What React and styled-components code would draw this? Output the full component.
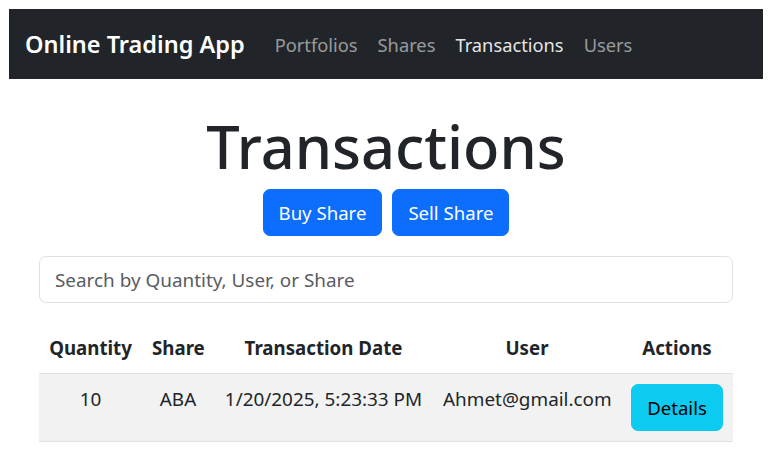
import styled, { createGlobalStyle } from "styled-components";

const GlobalStyle = createGlobalStyle`
  * { box-sizing: border-box; }
  body {
    margin: 9px;
    font-family: "Noto Sans", "Open Sans", sans-serif;
    color: #212529;
    background: #fff;
  }
`;

const Navbar = styled.nav`
  height: 70px;
  background: #212529;
  display: flex;
  align-items: center;
  padding: 0 16px;
`;

const Brand = styled.a`
  color: #fff;
  font-size: 23.5px;
  font-weight: 600;
  margin-right: 20px;
  text-decoration: none;
`;

const NavList = styled.ul`
  display: flex;
  list-style: none;
  margin: 0;
  padding: 0;
`;

const NavLink = styled.a`
  display: block;
  padding: 0 10px;
  font-size: 18.3px;
  text-decoration: none;
  color: ${(p) => (p.$active ? "rgba(255, 255, 255, 0.9)" : "rgba(255, 255, 255, 0.55)")};
`;

const Main = styled.main`
  padding: 0 30px;
`;

const Title = styled.h1`
  margin: 31px 0 8px;
  text-align: center;
  font-size: 59.5px;
  font-weight: 500;
  line-height: 1.2;
`;

const Actions = styled.div`
  display: flex;
  justify-content: center;
  gap: 10px;
`;

const Button = styled.button`
  font-family: inherit;
  font-size: 18.6px;
  line-height: 30px;
  padding: 7.5px 15px;
  border: 1px solid ${(p) => (p.$variant === "info" ? "#0dcaf0" : "#0d6efd")};
  border-radius: 7px;
  background: ${(p) => (p.$variant === "info" ? "#0dcaf0" : "#0d6efd")};
  color: ${(p) => (p.$variant === "info" ? "#000" : "#fff")};
  cursor: pointer;
`;

const Search = styled.input`
  display: block;
  width: 100%;
  height: 47px;
  margin-top: 20px;
  padding: 7.5px 15px;
  font-family: inherit;
  font-size: 18.9px;
  color: #212529;
  border: 1px solid #dee2e6;
  border-radius: 7px;
  outline: none;
  &::placeholder {
    color: #595c5f;
  }
`;

const Table = styled.table`
  width: 100%;
  margin-top: 20px;
  border-collapse: collapse;
  table-layout: fixed;
  vertical-align: top;
  font-size: 18.9px;
  line-height: 30px;
`;

const Th = styled.th`
  padding: 10px;
  font-size: 18.7px;
  font-weight: 700;
  text-align: center;
  white-space: nowrap;
  border-bottom: 1px solid #dee2e6;
`;

const Row = styled.tr`
  background: ${(p) => (p.$striped ? "#f2f2f2" : "#fff")};
  border-bottom: 1px solid #dee2e6;
`;

const Td = styled.td`
  padding: 10px;
  text-align: center;
  vertical-align: top;
  white-space: nowrap;
`;

const columns = [
  { label: "Quantity", width: 103 },
  { label: "Share", width: 72 },
  { label: "Transaction Date", width: 219 },
  { label: "User", width: 188 },
  { label: "Actions", width: 112 },
];

const transactions = [
  { id: 1, quantity: 10, share: "ABA", date: "1/20/2025, 5:23:33 PM", user: "Ahmet@gmail.com" },
];

export default function App() {
  return (
    <>
      <GlobalStyle />
      <Navbar>
        <Brand href="#">Online Trading App</Brand>
        <NavList>
          <li><NavLink href="#">Portfolios</NavLink></li>
          <li><NavLink href="#">Shares</NavLink></li>
          <li><NavLink href="#" $active>Transactions</NavLink></li>
          <li><NavLink href="#">Users</NavLink></li>
        </NavList>
      </Navbar>
      <Main>
        <Title>Transactions</Title>
        <Actions>
          <Button>Buy Share</Button>
          <Button>Sell Share</Button>
        </Actions>
        <Search placeholder="Search by Quantity, User, or Share" />
        <Table>
          <colgroup>
            {columns.map((c) => (
              <col key={c.label} style={{ width: c.width }} />
            ))}
          </colgroup>
          <thead>
            <tr>
              {columns.map((c) => (
                <Th key={c.label}>{c.label}</Th>
              ))}
            </tr>
          </thead>
          <tbody>
            {transactions.map((t) => (
              <Row key={t.id} $striped>
                <Td>{t.quantity}</Td>
                <Td>{t.share}</Td>
                <Td>{t.date}</Td>
                <Td>{t.user}</Td>
                <Td>
                  <Button $variant="info">Details</Button>
                </Td>
              </Row>
            ))}
          </tbody>
        </Table>
      </Main>
    </>
  );
}
